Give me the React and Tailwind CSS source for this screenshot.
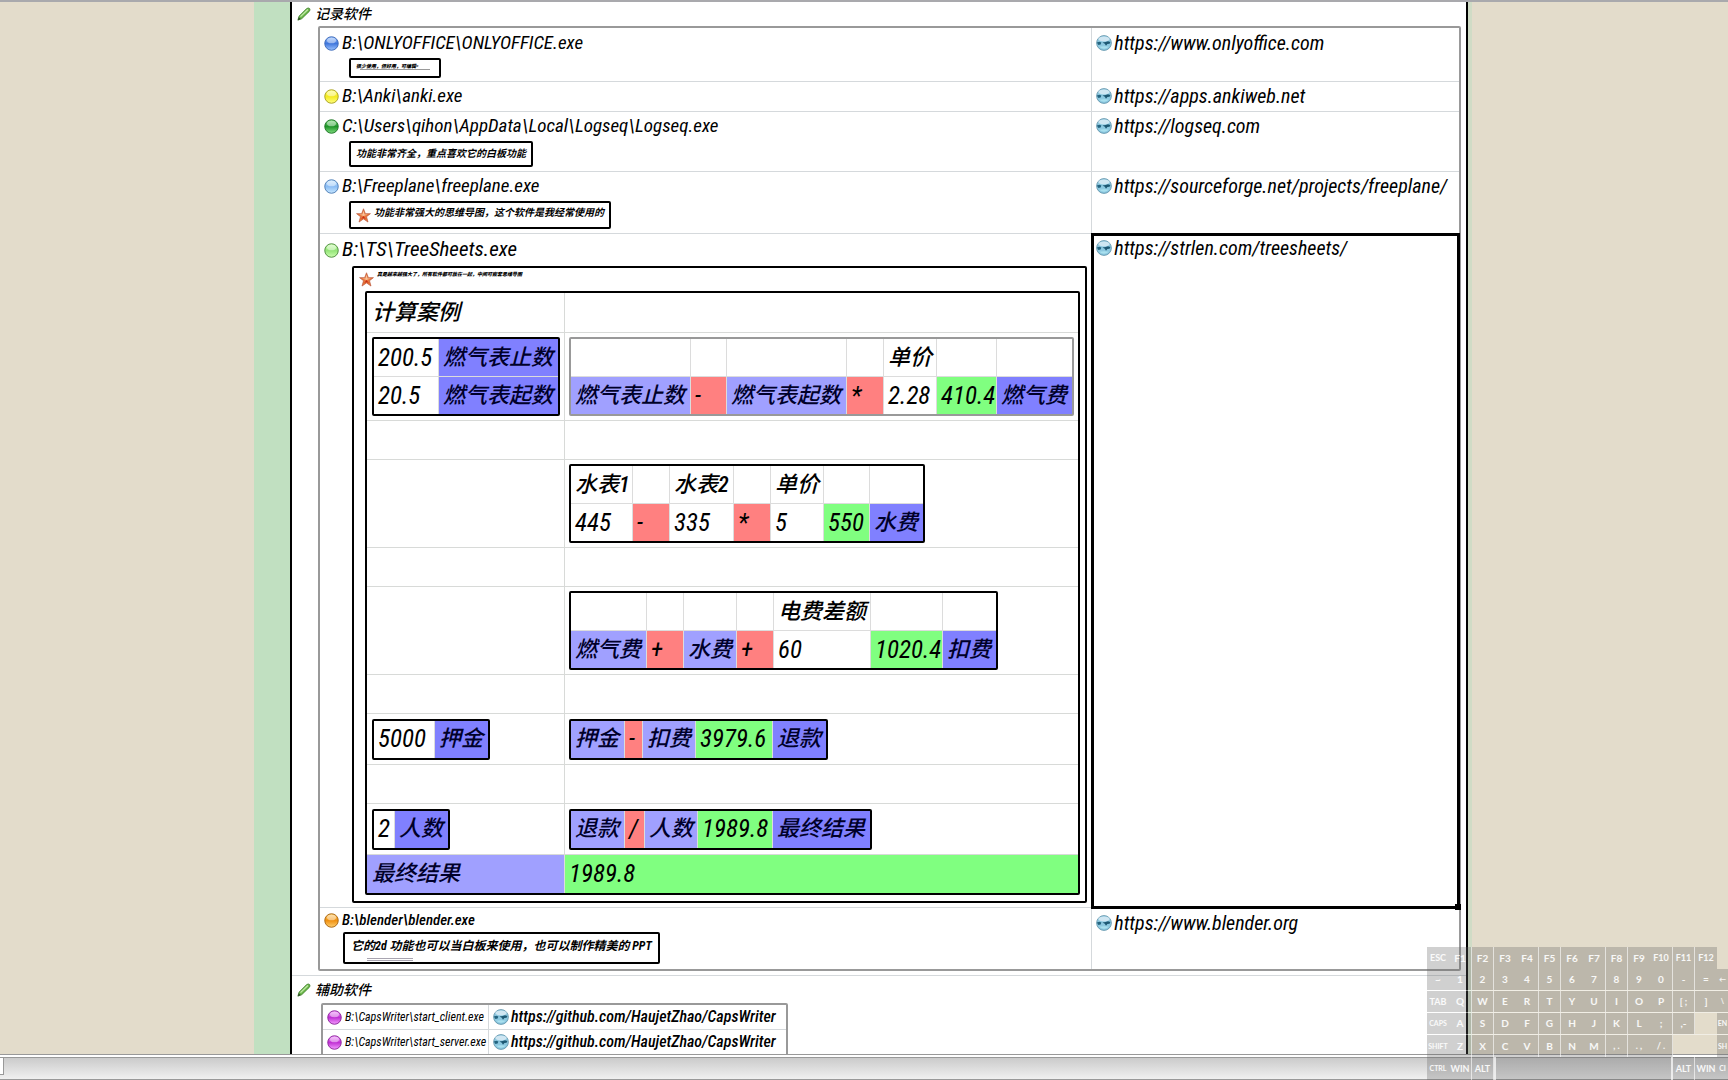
import React from 'react';
import clsx from 'clsx';

const FONT = "font-['Roboto_Condensed','Noto_Sans_CJK_SC',sans-serif]";

const TONES = {
  none: '',
  name: 'bg-[#8080ff] text-[#00002a]',
  ref: 'bg-[#a0a0ff] text-[#00002a]',
  op: 'bg-[#ff8080]',
  value: 'bg-[#80ff80]',
};

const Orb = ({ id, light, mid, dark }) => (
  <svg viewBox="0 0 16 16" className="w-[15px] h-[15px] shrink-0" aria-hidden="true">
    <defs>
      <linearGradient id={`orb-${id}`} x1="0" y1="0" x2="0" y2="1">
        <stop offset="0" stopColor={light} />
        <stop offset="0.5" stopColor={mid} />
        <stop offset="1" stopColor={light} />
      </linearGradient>
    </defs>
    <circle cx="8" cy="8" r="7.2" fill={`url(#orb-${id})`} stroke={dark} strokeWidth="1" />
    <ellipse cx="8" cy="4.8" rx="4.8" ry="3" fill="#fff" opacity="0.45" />
  </svg>
);

const Globe = () => (
  <svg viewBox="0 0 16 16" className="w-4 h-4 shrink-0" aria-hidden="true">
    <circle cx="8" cy="8" r="7.4" fill="#8cc8e0" stroke="#5d8fa6" strokeWidth="0.8" />
    <ellipse cx="8" cy="4" rx="5.6" ry="2.6" fill="#cfe6f2" />
    <path d="M.8 7.6 3.4 6.8 5.4 7.6 4.6 9.4 2.4 10Z" fill="#22637f" />
    <path d="M6.4 7.6 9.6 7 12 6.2 14.4 7 13.6 8.8 11.4 9 10 10.8 8.8 8.8Z" fill="#1d5873" />
    <path d="M3.2 11.8Q8 15.6 12.8 11.8 8 10.8 3.2 11.8Z" fill="#a9e0ee" />
  </svg>
);

const Star = () => (
  <svg viewBox="0 0 16 16" className="w-[15px] h-[15px] shrink-0" aria-hidden="true">
    <path d="M8 .8 10 6H15.4L11.2 9.3 12.8 15 8 11.6 3.2 15 4.8 9.3.6 6H6Z" fill="#e8763c" stroke="#b8563a" strokeWidth="0.7" />
    <path d="M8 3 9.2 6.9H12.6L8 8.6 3.4 6.9H6.8Z" fill="#f9c39a" />
    <path d="M8 8.6 10.6 12 8 10.6 5.4 12Z" fill="#c92c14" />
  </svg>
);

const Pencil = () => (
  <svg viewBox="0 0 16 16" className="w-[14px] h-[14px] shrink-0" aria-hidden="true">
    <path d="M1 15 2.4 10.4 11 1.8Q13 .4 14.4 1.8 15.6 3.4 14 5L5.4 13.4Z" fill="#6cb84a" stroke="#3f7d2c" strokeWidth="0.9" />
    <path d="M4 11 12.4 2.8" stroke="#c4ebaa" strokeWidth="1.4" />
    <path d="M1 15 2 11.8 4.2 13.8Z" fill="#2c4a24" />
  </svg>
);

const ORBS = {
  blue: { light: '#9cc4ff', mid: '#3f76dc', dark: '#3a68b8' },
  yellow: { light: '#ffff80', mid: '#f4ea20', dark: '#a8a020' },
  green: { light: '#7fdc7f', mid: '#1f9428', dark: '#1c7424' },
  sky: { light: '#c8e8ff', mid: '#8abcf4', dark: '#4c7cb4' },
  lime: { light: '#ccffb0', mid: '#94e478', dark: '#4c8c3c' },
  orange: { light: '#ffd070', mid: '#f09010', dark: '#a86410' },
  purple: { light: '#f49cff', mid: '#c030d4', dark: '#8c249c' },
};

const Path = ({ orb, id, children, className }) => (
  <div className={clsx('flex items-center gap-[3px] pl-1 whitespace-nowrap', className)}>
    <Orb id={id} {...ORBS[orb]} />
    <span>{children}</span>
  </div>
);

const SiteLink = ({ href, className }) => (
  <a href={href} className={clsx('flex items-center gap-0.5 pl-1 whitespace-nowrap', className)}>
    <Globe />
    <span>{href}</span>
  </a>
);

const Note = ({ className, children }) => (
  <div className={clsx('w-fit rounded-xs border-2 border-black whitespace-nowrap', className)}>{children}</div>
);

const Grid = ({ rows, widths, gray }) => (
  <table
    className={clsx(
      'border-separate border-spacing-0 rounded-xs border-2',
      gray ? 'border-[#999999]' : 'border-black'
    )}
  >
    <tbody>
      {rows.map((row, r) => (
        <tr key={r}>
          {row.map(([text, tone = 'none'], c) => (
            <td
              key={c}
              className={clsx(
                'p-0 pl-1 whitespace-nowrap border-[#dcdcdc]',
                /^[\x00-\x7f]*$/.test(text) ? 'text-[25px]/6 font-normal' : 'text-[22px]/6 font-medium',
                r < rows.length - 1 ? 'h-[38px] border-b' : 'h-[37px]',
                c < row.length - 1 && 'border-r',
                widths[c],
                TONES[tone]
              )}
            >
              {text}
            </td>
          ))}
        </tr>
      ))}
    </tbody>
  </table>
);

const SHEET = [
  { h: 'h-10', left: '计算案例' },
  {
    h: 'h-[88px]',
    left: (
      <Grid
        widths={['w-[65px]', 'w-[119px]']}
        rows={[
          [['200.5'], ['燃气表止数', 'name']],
          [['20.5'], ['燃气表起数', 'name']],
        ]}
      />
    ),
    right: (
      <Grid
        gray
        widths={['w-[120px]', 'w-9', 'w-[120px]', 'w-[37px]', 'w-[53px]', 'w-[60px]', 'w-[75px]']}
        rows={[
          [[''], [''], [''], [''], ['单价'], [''], ['']],
          [['燃气表止数', 'ref'], ['-', 'op'], ['燃气表起数', 'ref'], ['*', 'op'], ['2.28'], ['410.4', 'value'], ['燃气费', 'name']],
        ]}
      />
    ),
  },
  { h: 'h-[39px]' },
  {
    h: 'h-[88px]',
    right: (
      <Grid
        widths={['w-[62px]', 'w-[37px]', 'w-16', 'w-[37px]', 'w-[53px]', 'w-[46px]', 'w-[53px]']}
        rows={[
          [['水表1'], [''], ['水表2'], [''], ['单价'], [''], ['']],
          [['445'], ['-', 'op'], ['335'], ['*', 'op'], ['5'], ['550', 'value'], ['水费', 'name']],
        ]}
      />
    ),
  },
  { h: 'h-[39px]' },
  {
    h: 'h-[88px]',
    right: (
      <Grid
        widths={['w-[76px]', 'w-[37px]', 'w-[53px]', 'w-[37px]', 'w-[97px]', 'w-[72px]', 'w-[53px]']}
        rows={[
          [[''], [''], [''], [''], ['电费差额'], [''], ['']],
          [['燃气费', 'ref'], ['+', 'op'], ['水费', 'ref'], ['+', 'op'], ['60'], ['1020.4', 'value'], ['扣费', 'name']],
        ]}
      />
    ),
  },
  { h: 'h-[39px]' },
  {
    h: 'h-[51px]',
    left: <Grid widths={['w-[61px]', 'w-[53px]']} rows={[[['5000'], ['押金', 'name']]]} />,
    right: (
      <Grid
        widths={['w-[54px]', 'w-[18px]', 'w-[53px]', 'w-[77px]', 'w-[53px]']}
        rows={[[['押金', 'ref'], ['-', 'op'], ['扣费', 'ref'], ['3979.6', 'value'], ['退款', 'name']]]}
      />
    ),
  },
  { h: 'h-[39px]' },
  {
    h: 'h-[51px]',
    left: <Grid widths={['w-[21px]', 'w-[53px]']} rows={[[['2'], ['人数', 'name']]]} />,
    right: (
      <Grid
        widths={['w-[54px]', 'w-5', 'w-[53px]', 'w-[75px]', 'w-[97px]']}
        rows={[[['退款', 'ref'], ['/', 'op'], ['人数', 'ref'], ['1989.8', 'value'], ['最终结果', 'name']]]}
      />
    ),
  },
];

const Calculation = () => (
  <table className="w-full border-separate border-spacing-0 rounded-xs border-2 border-black">
    <tbody>
      {SHEET.map(({ h, left, right }, i) => (
        <tr key={i}>
          <td className={clsx('w-[198px] border-r border-b border-[#d8dad8] p-0 pl-[5px] text-[22px]/6 font-medium', h)}>{left}</td>
          <td className="border-b border-[#d8dad8] p-0 pl-1">{right}</td>
        </tr>
      ))}
      <tr>
        <td className="h-[38px] border-r border-[#dcdcdc] bg-[#a0a0ff] p-0 pl-[5px] text-[22px]/6 font-medium text-[#00002a]">最终结果</td>
        <td className="bg-[#80ff80] p-0 pl-1 text-[25px]/6">1989.8</td>
      </tr>
    </tbody>
  </table>
);

const LEFT_CELL = 'p-0 align-top border-r border-b border-[#d5d9dc]';
const RIGHT_CELL = 'p-0 align-top border-b border-[#d5d9dc]';

const RecordApps = () => (
  <table className="w-full table-fixed border-separate border-spacing-0 rounded-xs border-2 border-[#999999] text-[19px]">
    <colgroup>
      <col />
      <col className="w-[367px]" />
    </colgroup>
    <tbody>
      <tr>
        <td className={clsx(LEFT_CELL, 'h-[54px]')}>
          <Path orb="blue" id="office" className="h-[30px]">B:\ONLYOFFICE\ONLYOFFICE.exe</Path>
          <Note className="ml-[29px] h-5 min-w-[92px] px-[5px] pt-1">
            <p className="text-[5px]/[5px] font-black">很少使用，但好用，可编辑=</p>
            <div className="mr-1 ml-1 h-0.5 border-t border-[#999999]" />
          </Note>
        </td>
        <td className={RIGHT_CELL}><SiteLink href="https://www.onlyoffice.com" className="h-[30px] text-xl" /></td>
      </tr>
      <tr>
        <td className={clsx(LEFT_CELL, 'h-[30px]')}>
          <Path orb="yellow" id="anki" className="h-[29px]">B:\Anki\anki.exe</Path>
        </td>
        <td className={RIGHT_CELL}><SiteLink href="https://apps.ankiweb.net" className="h-7 text-xl" /></td>
      </tr>
      <tr>
        <td className={clsx(LEFT_CELL, 'h-[60px]')}>
          <Path orb="green" id="logseq" className="h-[29px]">C:\Users\qihon\AppData\Local\Logseq\Logseq.exe</Path>
          <Note className="ml-[29px] h-[26px] px-[5px] text-[10px]/[22px] font-bold">功能非常齐全，重点喜欢它的白板功能</Note>
        </td>
        <td className={RIGHT_CELL}><SiteLink href="https://logseq.com" className="h-7 text-xl" /></td>
      </tr>
      <tr>
        <td className={clsx(LEFT_CELL, 'h-[62px]')}>
          <Path orb="sky" id="freeplane" className="h-[29px]">B:\Freeplane\freeplane.exe</Path>
          <Note className="ml-[29px] flex h-7 items-center gap-[3px] px-[5px] text-[10px]/[20px] font-bold">
            <Star />
            <span className="pb-1">功能非常强大的思维导图，这个软件是我经常使用的</span>
          </Note>
        </td>
        <td className={RIGHT_CELL}><SiteLink href="https://sourceforge.net/projects/freeplane/" className="h-7 text-xl" /></td>
      </tr>
      <tr>
        <td className={clsx(LEFT_CELL, 'h-[674px]')}>
          <Path orb="lime" id="treesheets" className="h-8 text-[21px]">B:\TS\TreeSheets.exe</Path>
          <div className="ml-8 mr-1 rounded-xs border-2 border-black pr-[5px] pb-1.5 pl-[11px]">
            <div className="-ml-1.5 flex h-[23px] gap-[3px]">
              <div className="pt-1"><Star /></div>
              <p className="pt-1 text-[5px]/[5px] font-black">真是越来越强大了，所有软件都可放在一起，中间可嵌套思维导图</p>
            </div>
            <Calculation />
          </div>
        </td>
        <td className="relative p-0 align-top outline-[3px] -outline-offset-2 outline-black">
          <SiteLink href="https://strlen.com/treesheets/" className="h-7 text-xl" />
          <span className="absolute -right-0.5 -bottom-0.5 size-1.5 bg-black" />
        </td>
      </tr>
      <tr>
        <td className="h-[61px] border-r border-[#d5d9dc] p-0 align-top">
          <Path orb="orange" id="blender" className="h-6 text-[15px] font-medium">B:\blender\blender.exe</Path>
          <Note className="ml-[23px] h-8 px-[6px] text-xs font-bold">
            <p className="leading-6">它的2d 功能也可以当白板来使用，也可以制作精美的 PPT</p>
            <div className="ml-4 h-[3px] w-[46px] border-y border-[#a8a4b0]" />
          </Note>
        </td>
        <td className="p-0 align-top"><SiteLink href="https://www.blender.org" className="h-[29px] text-xl" /></td>
      </tr>
    </tbody>
  </table>
);

const HelperApps = () => (
  <table className="border-separate border-spacing-0 rounded-xs border-2 border-[#999999]">
    <tbody>
      {['client', 'server'].map((part) => (
        <tr key={part}>
          <td className="h-[25px] w-[166px] border-r border-b border-[#d5d9dc] p-0">
            <Path orb="purple" id={part} className="text-xs/6">{`B:\\CapsWriter\\start_${part}.exe`}</Path>
          </td>
          <td className="w-[297px] border-b border-[#d5d9dc] p-0">
            <SiteLink href="https://github.com/HaujetZhao/CapsWriter" className="text-base/6 font-medium" />
          </td>
        </tr>
      ))}
    </tbody>
  </table>
);

const KEYS = [
  ['ESC', 'F1', 'F2', 'F3', 'F4', 'F5', 'F6', 'F7', 'F8', 'F9', 'F10', 'F11', 'F12', null],
  ['~', '1', '2', '3', '4', '5', '6', '7', '8', '9', '0', '-', '=', '←'],
  ['TAB', 'Q', 'W', 'E', 'R', 'T', 'Y', 'U', 'I', 'O', 'P', '[ ;', ']', '\\'],
  ['CAPS', 'A', 'S', 'D', 'F', 'G', 'H', 'J', 'K', 'L', ';', ',-', null, 'EN'],
  ['SHIFT', 'Z', 'X', 'C', 'V', 'B', 'N', 'M', ', .', '. ,', '/ .', null, null, 'SH'],
];

const KEY = 'shrink-0 bg-[#646464]/30 text-center overflow-hidden whitespace-nowrap';

const keySize = (label, index) => {
  if (index === 13) return 'text-[7px]';
  if (label.length > 3) return 'text-[7px]';
  return label.length > 2 ? 'text-[9px]' : 'text-[10px]';
};

const Key = ({ label, index }) => {
  const width = index === 13 ? 'w-[11px]' : index % 3 === 1 ? 'w-[23px]' : 'w-[22px]';
  if (label === null) return <span className={clsx('shrink-0', width)} />;
  return (
    <button
      type="button"
      className={clsx(KEY, width, index % 3 !== 0 && index < 13 && 'border-r border-white/60', keySize(label, index))}
    >
      {label}
    </button>
  );
};

const Keyboard = () => (
  <div className="absolute right-0 bottom-0 z-10 flex w-[301px] flex-col overflow-hidden font-['Lato',sans-serif] font-bold text-white/90">
    {KEYS.map((row, r) => (
      <div key={r} className={clsx('flex h-[22px]', r > 0 && r < 4 && 'border-b border-white/50')}>
        {row.map((label, i) => (
          <Key key={i} label={label} index={i} />
        ))}
      </div>
    ))}
    <div className="flex h-[23px]">
      <Key label="CTRL" index={0} />
      <Key label="WIN" index={1} />
      <Key label="ALT" index={2} />
      <button type="button" aria-label="Space" className={clsx(KEY, 'w-[179px] border-x-2 border-white/70')} />
      <Key label="ALT" index={11} />
      <Key label="WIN" index={12} />
      <Key label="CI" index={13} />
    </div>
  </div>
);

export default function App() {
  return (
    <div className={clsx('relative flex h-screen flex-col overflow-hidden bg-[#e3dccb] text-black', FONT)}>
      <div className="h-0.5 shrink-0 bg-[#a9a9ad]" />

      <main className="flex min-h-0 flex-1 overflow-hidden italic">
        <div className="w-[14.7%] shrink-0" />
        <div className="w-9 shrink-0 bg-[#c1e0c1]" />
        <div className="min-w-0 flex-1 border-x-2 border-black bg-white">
          <section className="pr-[5px]">
            <h2 className="flex h-6 items-center gap-1 pl-[5px] text-sm font-medium">
              <Pencil />
              记录软件
            </h2>
            <div className="pl-[26px]">
              <RecordApps />
            </div>
          </section>
          <section className="mt-1 border-t border-[#d5d9dc]">
            <h2 className="flex h-[27px] items-center gap-1 pl-[5px] text-sm font-medium">
              <Pencil />
              辅助软件
            </h2>
            <div className="pl-[29px]">
              <HelperApps />
            </div>
          </section>
        </div>
        <div className="w-1 shrink-0 bg-[#d0dcc6]" />
        <div className="w-[14.8%] shrink-0" />
      </main>

      {/* Status bar */}
      <footer className="flex h-[26px] shrink-0 flex-col border-t border-[#999999] bg-white pt-0.5">
        <div className="flex flex-1 border-y border-[#999999] bg-linear-to-b from-[#cbcbcb] to-[#f0f0f0]">
          <div className="mb-1 w-1 border-r border-b border-[#999999] bg-white" />
        </div>
      </footer>

      <Keyboard />
    </div>
  );
}
